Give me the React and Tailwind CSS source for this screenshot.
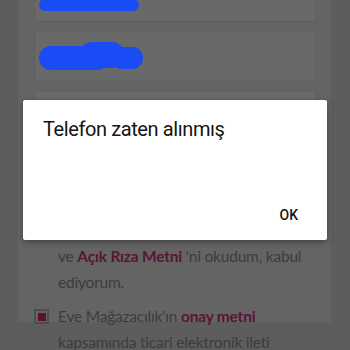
export default function App() {
  return (
    <div className="relative w-[350px] h-[350px] overflow-hidden bg-[#5d5d5d]" style={{ fontFamily: "Lato, 'Noto Sans', sans-serif" }}>
      <div className="ml-[18px] w-[313px] h-full bg-[#646464] pl-[16px] pr-[15px]">
        <div className="flex flex-col gap-[9px] -mt-[28px]">
          <div className="h-[50px] border border-[#606060] bg-[#696969] flex items-end pb-[10px] pl-[4px]">
            <div className="w-[100px] h-[12px] rounded-full bg-[#1a4cf5]" />
          </div>
          <div className="h-[50px] border border-[#606060] bg-[#696969] flex items-center pl-[4px]">
            <div className="flex items-center">
              <div className="w-[70px] h-[24px] rounded-full bg-[#1a4cf5] mt-[4px]" />
              <div className="-ml-[30px] w-[46px] h-[26px] rounded-full bg-[#1a4cf5] -mt-[2px]" />
              <div className="-ml-[14px] w-[32px] h-[22px] rounded-full bg-[#1a4cf5] mt-[4px]" />
            </div>
          </div>
          <div className="h-[50px] border border-[#606060] bg-[#696969]" />
        </div>
        <div className="mt-[77px] pl-[24px] text-[15.5px] leading-[26px] text-[#3c3c3c] whitespace-nowrap tracking-[-0.2px]">
          <p>
            kullanımı ile <span className="font-bold text-[#5a1434]">Aydınlatma Metni</span>
          </p>
          <p>
            ve <span className="font-bold text-[#5a1434]">Açık Rıza Metni</span> 'ni okudum, kabul
          </p>
          <p>ediyorum.</p>
        </div>
        <div className="mt-[8px] flex gap-[9px]">
          <div className="mt-[6px] w-[15px] h-[15px] shrink-0 border-[2px] border-[#4d4d4d] flex items-center justify-center">
            <div className="w-[8px] h-[8px] bg-[#5e0f30]" />
          </div>
          <div className="text-[15.5px] leading-[26px] text-[#3c3c3c] whitespace-nowrap tracking-[-0.2px]">
            <p>
              Eve Mağazacılık'ın <span className="font-bold text-[#5a1434]">onay metni</span>
            </p>
            <p>kapsamında ticari elektronik ileti</p>
          </div>
        </div>
      </div>
      <div
        className="absolute left-[23px] top-[100px] w-[304px] h-[140px] bg-white shadow-[0_2px_6px_rgba(0,0,0,0.35)] rounded-[2px] flex flex-col justify-between pl-[20px] pr-[29px] pt-[16px] pb-[17px]"
        style={{ fontFamily: "Roboto, 'Noto Sans', sans-serif" }}
      >
        <div className="text-[20px] leading-[26px] tracking-[-0.4px] text-[#151515]">Telefon zaten alınmış</div>
        <div className="self-end text-[14px] leading-[16px] font-medium text-[#151515]">OK</div>
      </div>
    </div>
  );
}
